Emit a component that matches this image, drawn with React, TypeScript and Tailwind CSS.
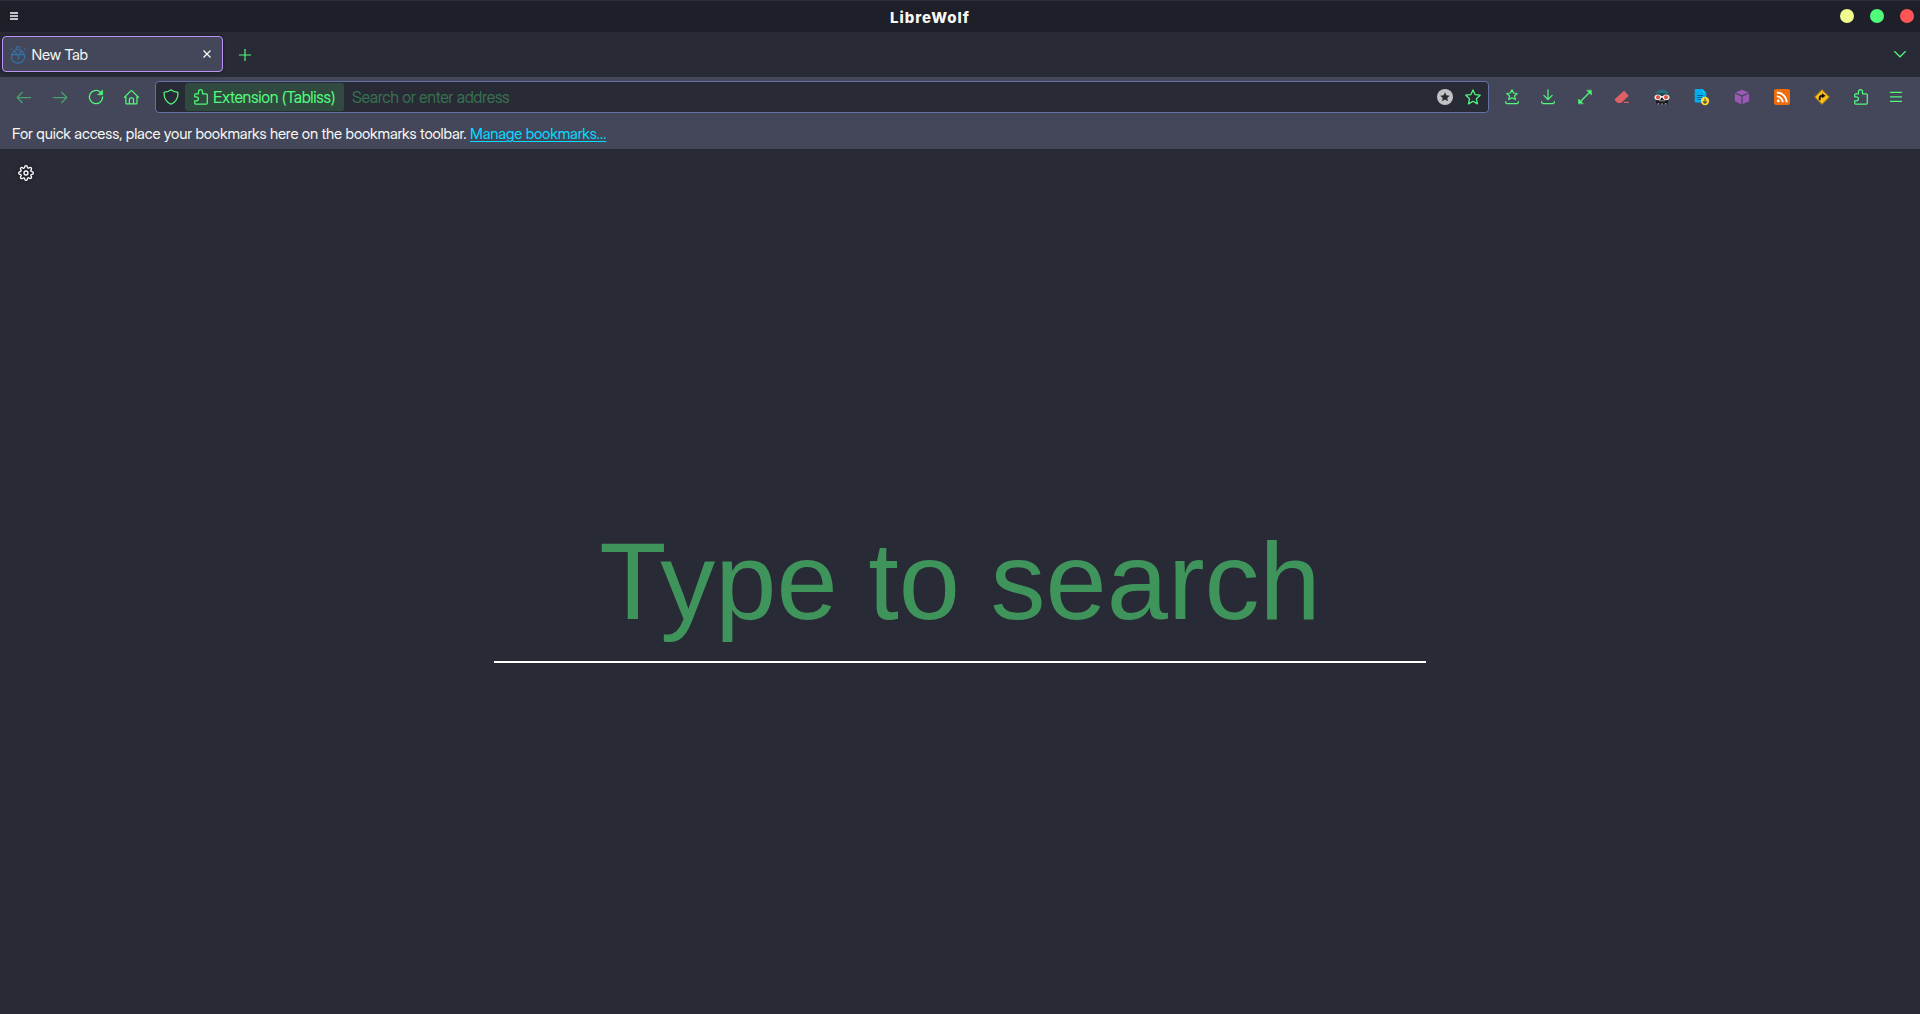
import React from "react";
import { FiSettings } from "react-icons/fi";

type IconProps = { className?: string; children: React.ReactNode };

function Line({ className = "", children }: IconProps) {
  return (
    <svg
      viewBox="0 0 16 16"
      className={`h-4 w-4 shrink-0 overflow-visible ${className}`}
      fill="none"
      stroke="currentColor"
      strokeWidth="1.25"
      strokeLinecap="round"
      strokeLinejoin="round"
    >
      {children}
    </svg>
  );
}

const Back = () => (
  <Line className="opacity-50">
    <path d="M14.600 8.500H1.300M6.300 3.300 1.200 8.500l5.100 5.200" />
  </Line>
);
const Forward = () => (
  <Line className="opacity-50">
    <path d="M1.300 8.500h13.400M9.700 3.300 14.800 8.500l-5.100 5.200" />
  </Line>
);
const Reload = () => (
  <Line>
    <path d="M12.300 3A6.600 6.600 0 1 0 14.600 8" strokeWidth="1.300" />
    <path d="M14.600 1.200v4.600H10z" fill="currentColor" strokeWidth=".6" />
  </Line>
);
const Home = () => (
  <Line>
    <path d="m.4 8.400 6.400-6.500a.9.9 0 0 1 1.300 0l6.400 6.500M1.900 7.300v6.600c0 .5.4.9.9.9h9.300c.5 0 .9-.4.9-.9V7.300M5.400 14.600v-4.100c0-.9.6-1.600 1.500-1.600h1.100c.9 0 1.500.7 1.500 1.600v4.100" />
  </Line>
);
const Shield = () => (
  <Line>
    <path d="M8 .7C6.100 2.200 4 3 1.700 3.200c-.5.1-.7.3-.7.8 0 5.400 2.200 9.100 7 11.300 4.800-2.200 7-5.900 7-11.300 0-.5-.2-.7-.7-.8C12 3 9.900 2.200 8 .7z" />
  </Line>
);
const Puzzle = () => (
  <Line>
    <path d="M1.700 5.700c0-.5.3-.9.9-.9h2.900V2.700a2 2 0 0 1 4 0v2.100h3.800c.6 0 1 .4 1 1v8.300c0 .6-.4 1-1 1H2.600c-.6 0-.9-.4-.9-1v-2.300h1.700a2 2 0 0 0 0-4H1.700z" />
  </Line>
);
const Star = () => (
  <Line>
    <path d="m8 .9 2.100 4.700 5.100.6-3.800 3.500 1 5.200L8 12.300l-4.500 2.600 1-5.200L.8 6.200l5.100-.6z" />
  </Line>
);
const BookmarksMenu = () => (
  <Line>
    <path d="m8 .8 1.600 3.200 3.600.5-2.600 2.400.7 3.600L8 8.800l-3.200 1.700.7-3.600-2.700-2.400L6.400 4z" />
    <path d="M1.600 12.700v.4c0 .8.600 1.400 1.400 1.400h10c.8 0 1.400-.6 1.400-1.400v-.4" />
  </Line>
);
const Download = () => (
  <Line>
    <path d="M8 .8v9.700M3.900 6.400 8 10.600l4.100-4.200" />
    <path d="M1.600 12.700v.4c0 .8.600 1.400 1.400 1.400h10c.8 0 1.400-.6 1.400-1.400v-.4" />
  </Line>
);
const Resize = () => (
  <Line>
    <path d="m3.500 12.500 9-9" strokeWidth="1.300" />
    <path d="M14.400 1.500v4.600L9.900 1.500zM1.500 14.500V9.900l4.600 4.600z" fill="currentColor" strokeWidth=".5" />
  </Line>
);
const Eraser = () => (
  <svg viewBox="0 0 16 16" className="h-4 w-4 shrink-0" fill="#e06065">
    <path d="M9.200 2.400 1.200 9.800c-.6.6-.6 1.200-.1 1.700L3 13.600c.3.300.6.400 1 .4h2.600c.4 0 .7-.1 1-.4l6.400-6c.6-.6.6-1.200.1-1.700l-3.300-3.500c-.5-.5-1.100-.5-1.600 0z" />
    <path d="M10.300 12.800h4.500V14H9.300z" />
  </svg>
);
const Robber = () => (
  <svg viewBox="0 0 16 16" className="h-4 w-4 shrink-0 overflow-visible">
    <path d="M1 7.500C1 3 4 .6 8 .6S15 3 15 7.500z" fill="#2b6b7a" />
    <path d="M1 5.200c4-1.400 10-1.400 14 0V8H1z" fill="#1d4450" />
    <path d="M1.500 9h13l-1 6.400h-11z" fill="#15191f" />
    <path d="M5 11.500h6v.7H5zM3.600 14.300h1.600v1.200H3.600zM7.200 14.500h1.600v1H7.200zM10.800 14.300h1.600v1.200h-1.600z" fill="#c7b7b0" />
    <ellipse cx="3.900" cy="8.300" rx="3.400" ry="2.900" fill="#f4ece8" />
    <ellipse cx="12.100" cy="8.300" rx="3.400" ry="2.900" fill="#f4ece8" />
    <path d="M6 7h4v1.500H6z" fill="#f4ece8" />
    <circle cx="4" cy="8.300" r="2" fill="#dc5138" />
    <circle cx="12" cy="8.300" r="2" fill="#dc5138" />
  </svg>
);
const FileDown = () => (
  <svg viewBox="0 0 16 16" className="h-4 w-4 shrink-0 overflow-visible">
    <path d="M1.800 0h6.700l3.800 3.900v9.700H1.800C1 13.600.7 13.300.7 12.500V1.100C.7.300 1 0 1.800 0z" fill="#00adef" />
    <path d="M8.500 0v3.900h3.800z" fill="#0fc9f3" />
    <path d="M3 6.500h6M3 8.500h5M3 10.500h4" stroke="#07619b" strokeWidth="1" />
    <circle cx="11" cy="12" r="4.200" fill="#ffd83a" />
    <path d="M11 9.500v4.700M9 12.300l2 2 2-2" fill="none" stroke="#4c4b3b" strokeWidth="1.100" />
  </svg>
);
const Cube = () => (
  <svg viewBox="0 0 16 16" className="h-4 w-4 shrink-0 overflow-visible">
    <path d="M8 .7 14.600 3.500 8 6.300 1.400 3.500zM.9 4.600l6.500 2.800v7.900L.9 12.300zM15.100 4.600 8.600 7.400v7.900l6.500-3z" fill="#9b59b6" />
  </svg>
);
const Rss = () => (
  <svg viewBox="0 0 16 16" className="h-4 w-4 shrink-0">
    <rect width="16" height="16" rx="2" fill="#ef6c0a" />
    <circle cx="4.300" cy="11.800" r="1.500" fill="#fff" />
    <path d="M2.800 7.400a5.900 5.900 0 0 1 5.900 5.900M2.800 3.500a9.800 9.800 0 0 1 9.800 9.800" fill="none" stroke="#fff" strokeWidth="1.900" />
  </svg>
);
const RoadSign = () => (
  <svg viewBox="0 0 16 16" className="h-4 w-4 shrink-0 overflow-visible">
    <path d="M8 .6 15.400 8 8 15.400.6 8z" fill="#fdbc12" stroke="#8f711f" strokeWidth="1" strokeLinejoin="round" />
    <path d="M4.800 11.300V9.300c0-2 1.200-3.500 3.300-3.500V4.200l3.400 2.600-3.400 2.500V7.900c-1 0-1.500.5-1.500 1.400v2z" fill="#111" />
  </svg>
);
const Menu = () => (
  <Line>
    <path d="M2.500 3.400h11M2.500 7.900h11M2.500 12.400h11" />
  </Line>
);

const TablissLogo = () => (
  <svg viewBox="0 0 16 16" className="h-4 w-4 shrink-0 overflow-visible" fill="none" stroke="#3278aa" strokeWidth="1.100">
    <circle cx="8" cy="2.400" r="1.900" />
    <path d="M4.500 4.400 1.700 8.600h5.400zM11.500 4.400 8.900 8.600h5.400z" />
    <path d="M1.700 8.600a6.600 6.600 0 1 0 12.600 0M7.100 8.600l2.100 2.900-1.600 1.700" />
    <path d="M.6 3.400h1.300M14.100 3.400h1.300" />
  </svg>
);

const tools = [
  { name: "Bookmarks", icon: <BookmarksMenu />, slot: "w-9" },
  { name: "Downloads", icon: <Download />, slot: "w-9" },
  { name: "Resize", icon: <Resize />, slot: "w-[38px]" },
  { name: "Eraser", icon: <Eraser />, slot: "w-[37px]" },
  { name: "Privacy", icon: <Robber />, slot: "w-[42px]" },
  { name: "Save page", icon: <FileDown />, slot: "w-[38px]" },
  { name: "Containers", icon: <Cube />, slot: "w-[42px]" },
  { name: "Feeds", icon: <Rss />, slot: "w-[38px]" },
  { name: "Redirector", icon: <RoadSign />, slot: "w-[42px]" },
  { name: "Extensions", icon: <Puzzle />, slot: "w-9" },
  { name: "Menu", icon: <Menu />, slot: "w-[34px]" },
];

function TitleBar() {
  return (
    <header className="flex h-8 shrink-0 items-center border-t border-[#2c2e3a] bg-[#1e1f29]">
      <div className="flex w-[890px] items-center pb-px pl-2.5">
        <div className="flex w-2 flex-col gap-px">
          <span className="h-0.5 bg-[#c4c4c8]" />
          <span className="h-0.5 bg-[#c4c4c8]" />
          <span className="h-0.5 bg-[#c4c4c8]" />
        </div>
      </div>
      <h1 className="mt-0.5 font-['Inter',sans-serif] text-[15px] leading-5 font-extrabold tracking-[0.95px] text-[#f8f8f2]">LibreWolf</h1>
      <div className="flex flex-1 items-center justify-end gap-4 pr-[6.5px] pb-0.5">
        <span className="h-3.5 w-3.5 rounded-full bg-[#f1fa8c]" />
        <span className="h-3.5 w-3.5 rounded-full bg-[#50fa7b]" />
        <span className="h-3.5 w-3.5 rounded-full bg-[#ff5555]" />
      </div>
    </header>
  );
}

function TabBar() {
  return (
    <div className="flex h-[45px] shrink-0 items-center bg-[#282a36] pb-px pl-0.5">
      <div className="flex h-9 w-[221px] items-center rounded border border-[#bd93f9] bg-[#44475a] pr-[11px] pl-[7px] shadow-[0_0_3px_rgba(0,0,0,0.5)]">
        <TablissLogo />
        <span className="mt-0.5 ml-[5.5px] flex-1 text-[15px] leading-5 tracking-[-0.1px] text-[#f8f8f2]">New Tab</span>
        <svg viewBox="0 0 8 8" className="h-2 w-2" stroke="#f8f8f2" strokeWidth="1.300">
          <path d="m.5.5 7 7M7.500.5l-7 7" />
        </svg>
      </div>
      <svg viewBox="0 0 12 12" className="mt-px ml-[15.5px] h-3 w-3 text-[#50fa7b]" stroke="currentColor" strokeWidth="1.200">
        <path d="M6 0v12M0 6h12" />
      </svg>
      <svg viewBox="0 0 12 12" className="mr-3.5 ml-auto h-3 w-3 text-[#50fa7b]" fill="none" stroke="currentColor" strokeWidth="1.200">
        <path d="m.3 3.300 5.700 5.500 5.700-5.500" />
      </svg>
    </div>
  );
}

function NavBar() {
  return (
    <nav className="flex h-10 shrink-0 items-center pl-1.5 text-[#50fa7b]">
      {[Back, Forward, Reload, Home].map((Icon, i) => (
        <button key={i} className="flex h-9 w-9 items-center justify-center">
          <Icon />
        </button>
      ))}
      <div className="ml-[5px] flex h-8 w-[1334px] items-center rounded border border-[#6272a4] bg-[#282a36]">
        <span className="mr-1.5 ml-[7px]">
          <Shield />
        </span>
        <span className="flex h-7 w-[159px] shrink-0 items-center rounded-[3px] bg-[#304a40] pl-2">
          <Puzzle />
          <span className="ml-1 text-[16px] leading-5 tracking-[-0.35px] whitespace-nowrap">Extension (Tabliss)</span>
        </span>
        <span className="ml-2 flex-1 text-[16px] leading-5 tracking-[-0.37px] text-[#37704e]">Search or enter address</span>
        <svg viewBox="0 0 16 16" className="h-4 w-4">
          <circle cx="8" cy="8" r="8" fill="#c3c3c5" />
          <path d="m8 3.300 1.400 3 3.300.4-2.400 2.200.6 3.300L8 10.600l-2.900 1.600.6-3.300-2.400-2.200 3.300-.4z" fill="#282a36" />
        </svg>
        <span className="mr-[7px] ml-3">
          <Star />
        </span>
      </div>
      <div className="ml-[4.5px] flex">
        {tools.map((t) => (
          <button key={t.name} aria-label={t.name} className={`flex h-9 items-center justify-center ${t.slot}`}>
            {t.icon}
          </button>
        ))}
      </div>
    </nav>
  );
}

export default function App() {
  return (
    <div className="flex h-screen w-full flex-col overflow-hidden bg-[#282a36] font-['Inter_Display','Inter',sans-serif]">
      <TitleBar />
      <TabBar />
      <div className="flex h-[72px] shrink-0 flex-col bg-[#44475a]">
        <NavBar />
        <p className="pt-[7px] pl-3 text-[15px] leading-5 tracking-[-0.16px] whitespace-nowrap text-[#f8f8f2]">
          For quick access, place your bookmarks here on the bookmarks toolbar.{" "}
          <a className="text-[#00ddff] underline decoration-1 underline-offset-2">Manage bookmarks…</a>
        </p>
      </div>
      <main className="flex flex-1 flex-col">
        <FiSettings className="mt-[15.5px] ml-[17.5px] h-4 w-4 text-white drop-shadow-[0_0_2px_rgba(0,0,0,0.5)]" />
        <div className="mx-auto mt-[336.5px] h-[146px] w-[932px] border-b-2 border-white text-center font-['Liberation_Sans',sans-serif] text-[110px] leading-[128px] whitespace-nowrap text-[#3f945b]">
          Type to search
        </div>
      </main>
    </div>
  );
}
